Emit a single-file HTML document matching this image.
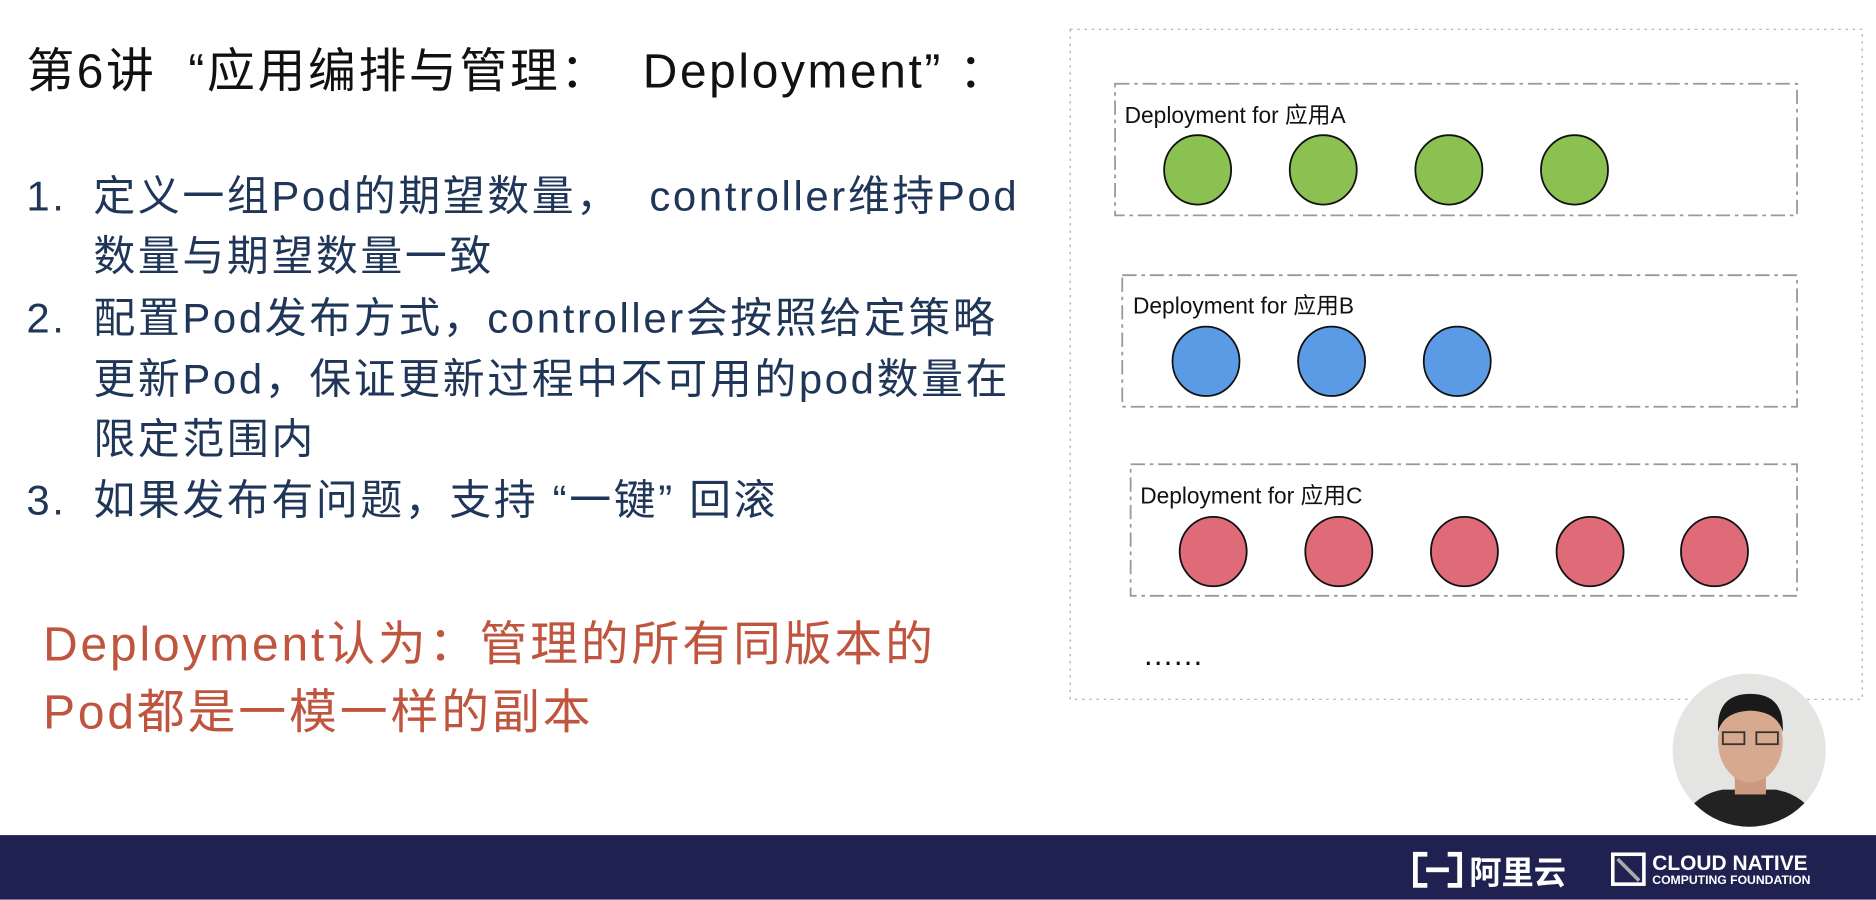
<!DOCTYPE html>
<html><head><meta charset="utf-8"><style>
html,body{margin:0;padding:0;background:#fff;overflow:hidden;width:1876px;height:900px}
#w{position:absolute;left:0;top:0;width:1568px;height:752px;transform:scale(1.19643);transform-origin:0 0;font-family:"Liberation Sans","Noto Sans CJK SC",sans-serif}
.t{position:absolute;white-space:nowrap}
.l{font-size:35px;color:#1f3658;line-height:50px;letter-spacing:2.2px}
.r{font-size:40px;color:#c0553f;letter-spacing:2.4px}
</style></head><body><div id="w">
<div class="t" style="left:22px;top:27px;font-size:40px;color:#111;letter-spacing:2.2px">第6讲&nbsp; “应用编排与管理：&nbsp; Deployment” ：</div>
<div class="t l" style="left:22px;top:140px">1.</div>
<div class="t l" style="left:78px;top:140px">定义一组Pod的期望数量，&nbsp; controller维持Pod</div>
<div class="t l" style="left:78px;top:190px">数量与期望数量一致</div>
<div class="t l" style="left:22px;top:242px">2.</div>
<div class="t l" style="left:78px;top:242px">配置Pod发布方式，controller会按照给定策略</div>
<div class="t l" style="left:78px;top:293px">更新Pod，保证更新过程中不可用的pod数量在</div>
<div class="t l" style="left:78px;top:343px">限定范围内</div>
<div class="t l" style="left:22px;top:394px">3.</div>
<div class="t l" style="left:78px;top:394px">如果发布有问题，支持 “一键” 回滚</div>
<div class="t r" style="left:36px;top:506px">Deployment认为：管理的所有同版本的</div>
<div class="t r" style="left:36px;top:563px">Pod都是一模一样的副本</div>
<svg style="position:absolute;left:0;top:0" width="1568" height="752">
<rect x="894.5" y="24.5" width="662" height="560" fill="none" stroke="#aaa" stroke-width="1" stroke-dasharray="2,4"/>
<g fill="none" stroke="#999" stroke-width="1.5" stroke-dasharray="12,4,3,4">
<rect x="932" y="70" width="570" height="110"/>
<rect x="938" y="230" width="564" height="110"/>
<rect x="945" y="388" width="557" height="110"/>
</g>
<g font-family="Liberation Sans,Noto Sans CJK SC,sans-serif" font-size="19" fill="#111">
<text x="940" y="103">Deployment for 应用A</text>
<text x="947" y="262">Deployment for 应用B</text>
<text x="953" y="421">Deployment for 应用C</text>
<text x="955" y="556" font-size="26" letter-spacing="-1">……</text>
</g>
<g stroke="#111" stroke-width="1.5">
<g fill="#8bc150"><ellipse cx="1001" cy="142" rx="28" ry="29"/><ellipse cx="1106" cy="142" rx="28" ry="29"/><ellipse cx="1211" cy="142" rx="28" ry="29"/><ellipse cx="1316" cy="142" rx="28" ry="29"/></g>
<g fill="#5b9be6"><ellipse cx="1008" cy="302" rx="28" ry="29"/><ellipse cx="1113" cy="302" rx="28" ry="29"/><ellipse cx="1218" cy="302" rx="28" ry="29"/></g>
<g fill="#df6b78"><ellipse cx="1014" cy="461" rx="28" ry="29"/><ellipse cx="1119" cy="461" rx="28" ry="29"/><ellipse cx="1224" cy="461" rx="28" ry="29"/><ellipse cx="1329" cy="461" rx="28" ry="29"/><ellipse cx="1433" cy="461" rx="28" ry="29"/></g>
</g>
<defs><clipPath id="c"><circle cx="1462" cy="627" r="64"/></clipPath></defs>
<circle cx="1462" cy="627" r="64" fill="#e4e4e2"/>
<g clip-path="url(#c)">
<path d="M1400 700 Q1410 665 1440 660 L1484 660 Q1515 665 1525 700 Z" fill="#222"/>
<rect x="1450" y="640" width="26" height="24" fill="#c99a80"/>
<ellipse cx="1463" cy="620" rx="27" ry="34" fill="#d7a98f"/>
<path d="M1436 612 Q1434 580 1463 580 Q1492 580 1490 612 Q1486 595 1463 594 Q1440 595 1436 612Z" fill="#1a1a1a"/>
<rect x="1440" y="612" width="18" height="10" fill="none" stroke="#333" stroke-width="1.5"/>
<rect x="1468" y="612" width="18" height="10" fill="none" stroke="#333" stroke-width="1.5"/>
</g>
<rect x="0" y="698" width="1568" height="54" fill="#1f2150"/>
<g fill="none" stroke="#fff" stroke-width="4"><path d="M1193 714 H1183 V740 H1193"/><path d="M1210 714 H1220 V740 H1210"/></g>
<rect x="1192" y="725" width="19" height="4" fill="#fff"/>
<text x="1228" y="739" font-family="Noto Sans CJK SC,sans-serif" font-size="27" font-weight="bold" fill="#fff">阿里云</text>
<rect x="1348" y="714" width="26" height="25" fill="none" stroke="#fff" stroke-width="3"/>
<path d="M1352 718 L1370 736" stroke="#aaa" stroke-width="3"/>
<text x="1381" y="727" font-family="Liberation Sans,sans-serif" font-size="17.5" font-weight="bold" fill="#fff">CLOUD NATIVE</text>
<text x="1381" y="739" font-family="Liberation Sans,sans-serif" font-size="10.2" font-weight="bold" fill="#fff">COMPUTING FOUNDATION</text>
</svg>
</div></body></html>
